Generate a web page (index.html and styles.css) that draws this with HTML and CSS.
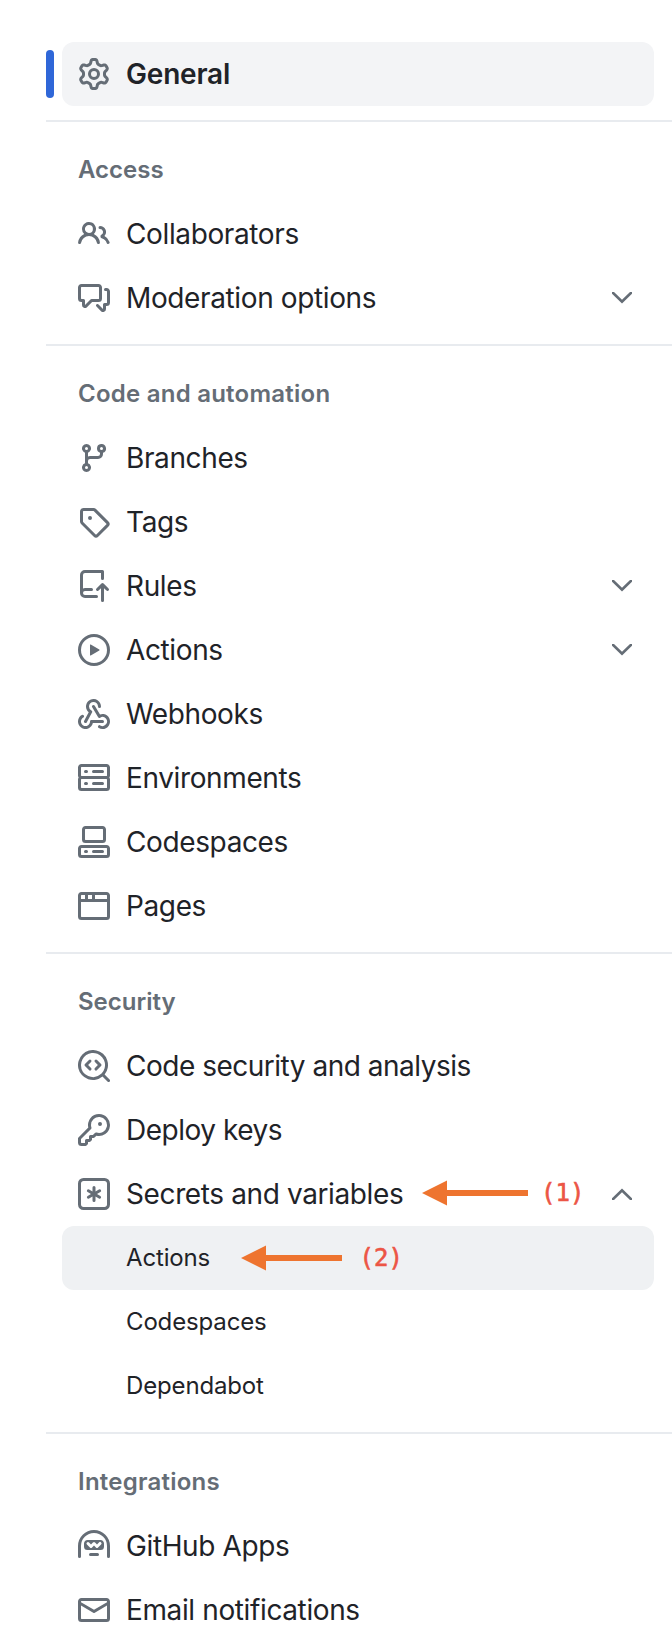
FILE: index.html
```
<!DOCTYPE html>
<html lang="en">
<head>
<meta charset="utf-8">
<title>Settings</title>
<link rel="stylesheet" href="styles.css">
</head>
<body>
<nav class="sidebar">
  <ul class="group">
    <li class="item selected"><svg class="icon" viewBox="0 0 16 16"><path d="M8 0a8.2 8.2 0 0 1 .701.031C9.444.095 9.99.645 10.16 1.29l.288 1.107c.018.066.079.158.212.224.231.114.454.243.668.386.123.082.233.09.299.071l1.103-.303c.644-.176 1.392.021 1.82.63.27.385.506.792.704 1.218.315.675.111 1.422-.364 1.891l-.814.806c-.049.048-.098.147-.088.294.016.257.016.515 0 .772-.01.147.038.246.088.294l.814.806c.475.469.679 1.216.364 1.891a7.977 7.977 0 0 1-.704 1.217c-.428.61-1.176.807-1.82.63l-1.102-.302c-.067-.019-.177-.011-.3.071a5.909 5.909 0 0 1-.668.386c-.133.066-.194.158-.211.224l-.29 1.106c-.168.646-.715 1.196-1.458 1.26a8.006 8.006 0 0 1-1.402 0c-.743-.064-1.289-.614-1.458-1.26l-.289-1.106c-.018-.066-.079-.158-.212-.224a5.738 5.738 0 0 1-.668-.386c-.123-.082-.233-.09-.299-.071l-1.103.303c-.644.176-1.392-.021-1.82-.63a8.12 8.12 0 0 1-.704-1.218c-.315-.675-.111-1.422.363-1.891l.815-.806c.05-.048.098-.147.088-.294a6.214 6.214 0 0 1 0-.772c.01-.147-.038-.246-.088-.294l-.815-.806C.635 6.045.431 5.298.746 4.623a7.92 7.92 0 0 1 .704-1.217c.428-.61 1.176-.807 1.82-.63l1.102.302c.067.019.177.011.3-.071.214-.143.437-.272.668-.386.133-.066.194-.158.211-.224l.29-1.106C6.009.645 6.556.095 7.299.03 7.53.01 7.764 0 8 0Zm-.571 1.525c-.036.003-.108.036-.137.146l-.289 1.105c-.147.561-.549.967-.998 1.189-.173.086-.34.183-.5.29-.417.278-.97.423-1.529.27l-1.103-.303c-.109-.03-.175.016-.195.045-.22.312-.412.644-.573.99-.014.031-.021.11.059.19l.815.806c.411.406.562.957.53 1.456a4.709 4.709 0 0 0 0 .582c.032.499-.119 1.05-.53 1.456l-.815.806c-.081.08-.073.159-.059.19.162.346.353.677.573.989.02.03.085.076.195.046l1.102-.303c.56-.153 1.113-.008 1.53.27.161.107.328.204.501.29.447.222.85.629.997 1.189l.289 1.105c.029.109.101.143.137.146a6.6 6.6 0 0 0 1.142 0c.036-.003.108-.036.137-.146l.289-1.105c.147-.561.549-.967.998-1.189.173-.086.34-.183.5-.29.417-.278.97-.423 1.529-.27l1.103.303c.109.029.175-.016.195-.045.22-.313.411-.644.573-.99.014-.031.021-.11-.059-.19l-.815-.806c-.411-.406-.562-.957-.53-1.456a4.709 4.709 0 0 0 0-.582c-.032-.499.119-1.05.53-1.456l.815-.806c.081-.08.073-.159.059-.19a6.464 6.464 0 0 0-.573-.989c-.02-.03-.085-.076-.195-.046l-1.102.303c-.56.153-1.113.008-1.53-.27a4.44 4.44 0 0 0-.501-.29c-.447-.222-.85-.629-.997-1.189l-.289-1.105c-.029-.11-.101-.143-.137-.146a6.6 6.6 0 0 0-1.142 0ZM11 8a3 3 0 1 1-6 0 3 3 0 0 1 6 0ZM9.5 8a1.5 1.5 0 1 0-3.001.001A1.5 1.5 0 0 0 9.5 8Z"/></svg><span class="label">General</span></li>
  </ul>

  <h2 class="heading">Access</h2>
  <ul class="group">
    <li class="item"><svg class="icon" viewBox="0 0 16 16"><path d="M2 5.5a3.5 3.5 0 1 1 5.898 2.549 5.508 5.508 0 0 1 3.034 4.084.75.75 0 1 1-1.482.235 4 4 0 0 0-7.9 0 .75.75 0 0 1-1.482-.236A5.507 5.507 0 0 1 3.102 8.05 3.493 3.493 0 0 1 2 5.5ZM11 4a3.001 3.001 0 0 1 2.22 5.018 5.01 5.01 0 0 1 2.56 3.012.749.749 0 0 1-.885.954.752.752 0 0 1-.549-.514 3.507 3.507 0 0 0-2.522-2.372.75.75 0 0 1-.574-.73v-.352a.75.75 0 0 1 .416-.672A1.5 1.5 0 0 0 11 5.5.75.75 0 0 1 11 4Zm-5.5-.5a2 2 0 1 0-.001 3.999A2 2 0 0 0 5.5 3.5Z"/></svg><span class="label">Collaborators</span></li>
    <li class="item"><svg class="icon" viewBox="0 0 16 16"><path d="M1.75 1h8.5c.966 0 1.75.784 1.75 1.75v5.5A1.75 1.75 0 0 1 10.25 10H7.061l-2.574 2.573A1.458 1.458 0 0 1 2 11.543V10h-.25A1.75 1.75 0 0 1 0 8.25v-5.5C0 1.784.784 1 1.75 1ZM1.5 2.75v5.5c0 .138.112.25.25.25h1a.75.75 0 0 1 .75.75v2.19l2.72-2.72a.749.749 0 0 1 .53-.22h3.5a.25.25 0 0 0 .25-.25v-5.5a.25.25 0 0 0-.25-.25h-8.5a.25.25 0 0 0-.25.25Zm13 2a.25.25 0 0 0-.25-.25h-.5a.75.75 0 0 1 0-1.5h.5c.966 0 1.75.784 1.75 1.75v5.5A1.75 1.75 0 0 1 14.25 12H14v1.543a1.458 1.458 0 0 1-2.487 1.03L9.22 12.28a.749.749 0 0 1 .326-1.275.749.749 0 0 1 .734.215l2.22 2.22v-2.19a.75.75 0 0 1 .75-.75h1a.25.25 0 0 0 .25-.25Z"/></svg><span class="label">Moderation options</span><svg class="icon chevron" viewBox="0 0 16 16"><path d="M3 5h1L8 8.9 12 5h1v.9L8 10.75 3 5.9Z"/></svg></li>
  </ul>

  <h2 class="heading wide">Code and automation</h2>
  <ul class="group">
    <li class="item"><svg class="icon" viewBox="0 0 16 16"><path d="M9.5 3.25a2.25 2.25 0 1 1 3 2.122V6A2.5 2.5 0 0 1 10 8.5H6a1 1 0 0 0-1 1v1.128a2.251 2.251 0 1 1-1.5 0V5.372a2.25 2.25 0 1 1 1.5 0v1.836A2.493 2.493 0 0 1 6 7h4a1 1 0 0 0 1-1v-.628A2.25 2.25 0 0 1 9.5 3.25Zm-6 0a.75.75 0 1 0 1.5 0 .75.75 0 0 0-1.5 0Zm8.25-.75a.75.75 0 1 0 0 1.5.75.75 0 0 0 0-1.5ZM4.25 12a.75.75 0 1 0 0 1.5.75.75 0 0 0 0-1.5Z"/></svg><span class="label">Branches</span></li>
    <li class="item"><svg class="icon" viewBox="0 0 16 16"><path d="M1 7.775V2.75C1 1.784 1.784 1 2.75 1h5.025c.464 0 .91.184 1.238.513l6.25 6.25a1.75 1.75 0 0 1 0 2.474l-5.026 5.026a1.75 1.75 0 0 1-2.474 0l-6.25-6.25A1.752 1.752 0 0 1 1 7.775Zm1.5 0c0 .066.026.13.073.177l6.25 6.25a.25.25 0 0 0 .354 0l5.025-5.025a.25.25 0 0 0 0-.354l-6.25-6.25a.25.25 0 0 0-.177-.073H2.75a.25.25 0 0 0-.25.25ZM6 5a1 1 0 1 1 0 2 1 1 0 0 1 0-2Z"/></svg><span class="label">Tags</span></li>
    <li class="item"><svg class="icon" viewBox="0 0 16 16"><path d="M1 2.5A2.5 2.5 0 0 1 3.5 0h8.75a.75.75 0 0 1 .75.75v3.5a.75.75 0 0 1-1.5 0V1.5h-8a1 1 0 0 0-1 1v6.708A2.493 2.493 0 0 1 3.5 9h3.25a.75.75 0 0 1 0 1.5H3.5a1 1 0 0 0 0 2h5.75a.75.75 0 0 1 0 1.5H3.5A2.5 2.5 0 0 1 1 11.5Zm13.23 7.79-1.224-1.224v6.184a.75.75 0 0 1-1.5 0V9.066L10.28 10.29a.75.75 0 0 1-1.06-1.061l2.505-2.504a.75.75 0 0 1 1.06 0L15.29 9.23a.751.751 0 0 1-.018 1.042.751.751 0 0 1-1.042.018Z"/></svg><span class="label">Rules</span><svg class="icon chevron" viewBox="0 0 16 16"><path d="M3 5h1L8 8.9 12 5h1v.9L8 10.75 3 5.9Z"/></svg></li>
    <li class="item"><svg class="icon" viewBox="0 0 16 16"><path d="M8 0a8 8 0 1 1 0 16A8 8 0 0 1 8 0ZM1.5 8a6.5 6.5 0 1 0 13 0 6.5 6.5 0 0 0-13 0Zm4.879-2.773 4.264 2.559a.25.25 0 0 1 0 .428l-4.264 2.559A.25.25 0 0 1 6 10.559V5.442a.25.25 0 0 1 .379-.215Z"/></svg><span class="label">Actions</span><svg class="icon chevron" viewBox="0 0 16 16"><path d="M3 5h1L8 8.9 12 5h1v.9L8 10.75 3 5.9Z"/></svg></li>
    <li class="item"><svg class="icon" viewBox="0 0 16 16"><path d="M5.5 4.25a2.25 2.25 0 0 1 4.5 0 .75.75 0 0 0 1.5 0 3.75 3.75 0 1 0-6.14 2.889l-2.272 4.258a.75.75 0 0 0 1.324.706L7 7.25a.75.75 0 0 0-.309-1.015A2.25 2.25 0 0 1 5.5 4.25Z"/><path d="M7.364 3.607a.75.75 0 0 1 1.03.257l2.608 4.349a3.75 3.75 0 1 1-.628 6.785.75.75 0 0 1 .752-1.299 2.25 2.25 0 1 0-.033-3.88.75.75 0 0 1-1.03-.256L7.107 4.636a.75.75 0 0 1 .257-1.03Z"/><path d="M2.9 8.776A.75.75 0 0 1 2.625 9.8 2.25 2.25 0 1 0 6 11.75a.75.75 0 0 1 .75-.751h5.5a.75.75 0 0 1 0 1.5H7.425a3.751 3.751 0 1 1-5.55-3.998.75.75 0 0 1 1.024.274Z"/></svg><span class="label">Webhooks</span></li>
    <li class="item"><svg class="icon" viewBox="0 0 16 16"><path d="M1.75 1h12.5c.966 0 1.75.784 1.75 1.75v4c0 .372-.116.717-.314 1 .198.283.314.628.314 1v4a1.75 1.75 0 0 1-1.75 1.75H1.75A1.75 1.75 0 0 1 0 12.75v-4c0-.358.109-.707.314-1a1.739 1.739 0 0 1-.314-1v-4C0 1.784.784 1 1.75 1ZM1.5 2.75v4c0 .138.112.25.25.25h12.5a.25.25 0 0 0 .25-.25v-4a.25.25 0 0 0-.25-.25H1.75a.25.25 0 0 0-.25.25Zm.25 5.75a.25.25 0 0 0-.25.25v4c0 .138.112.25.25.25h12.5a.25.25 0 0 0 .25-.25v-4a.25.25 0 0 0-.25-.25ZM7 4.75A.75.75 0 0 1 7.75 4h4.5a.75.75 0 0 1 0 1.5h-4.5A.75.75 0 0 1 7 4.75ZM7.75 10h4.5a.75.75 0 0 1 0 1.5h-4.5a.75.75 0 0 1 0-1.5ZM3 4.75A.75.75 0 0 1 3.75 4h.5a.75.75 0 0 1 0 1.5h-.5A.75.75 0 0 1 3 4.75ZM3.75 10h.5a.75.75 0 0 1 0 1.5h-.5a.75.75 0 0 1 0-1.5Z"/></svg><span class="label">Environments</span></li>
    <li class="item"><svg class="icon" viewBox="0 0 16 16"><path d="M0 11.25c0-.966.784-1.75 1.75-1.75h12.5c.966 0 1.75.784 1.75 1.75v3A1.75 1.75 0 0 1 14.25 16H1.75A1.75 1.75 0 0 1 0 14.25Zm2-9.5C2 .784 2.784 0 3.75 0h8.5C13.216 0 14 .784 14 1.75v5a1.75 1.75 0 0 1-1.75 1.75h-8.5A1.75 1.75 0 0 1 2 6.75Zm1.75-.25a.25.25 0 0 0-.25.25v5c0 .138.112.25.25.25h8.5a.25.25 0 0 0 .25-.25v-5a.25.25 0 0 0-.25-.25Zm-2 9.5a.25.25 0 0 0-.25.25v3c0 .138.112.25.25.25h12.5a.25.25 0 0 0 .25-.25v-3a.25.25 0 0 0-.25-.25Z"/><path d="M7 12.75a.75.75 0 0 1 .75-.75h4.5a.75.75 0 0 1 0 1.5h-4.5a.75.75 0 0 1-.75-.75Zm-4 0a.75.75 0 0 1 .75-.75h.5a.75.75 0 0 1 0 1.5h-.5a.75.75 0 0 1-.75-.75Z"/></svg><span class="label">Codespaces</span></li>
    <li class="item"><svg class="icon" viewBox="0 0 16 16"><path d="M0 2.75C0 1.784.784 1 1.75 1h12.5c.966 0 1.75.784 1.75 1.75v10.5A1.75 1.75 0 0 1 14.25 15H1.75A1.75 1.75 0 0 1 0 13.25ZM14.5 6h-13v7.25c0 .138.112.25.25.25h12.5a.25.25 0 0 0 .25-.25Zm-6-3.5v2h6V2.75a.25.25 0 0 0-.25-.25ZM5 2.5v2h2v-2Zm-3.25 0a.25.25 0 0 0-.25.25V4.5h2v-2Z"/></svg><span class="label">Pages</span></li>
  </ul>

  <h2 class="heading">Security</h2>
  <ul class="group">
    <li class="item tight"><svg class="icon" viewBox="0 0 16 16"><path d="M8.47 4.97a.75.75 0 0 0 0 1.06L9.94 7.5 8.47 8.97a.75.75 0 1 0 1.06 1.06l2-2a.75.75 0 0 0 0-1.06l-2-2a.75.75 0 0 0-1.06 0ZM6.53 6.03a.75.75 0 0 0-1.06-1.06l-2 2a.75.75 0 0 0 0 1.06l2 2a.75.75 0 1 0 1.06-1.06L5.06 7.5l1.47-1.47Z"/><path d="M12.246 13.307a7.501 7.501 0 1 1 1.06-1.06l2.474 2.473a.749.749 0 0 1-.326 1.275.749.749 0 0 1-.734-.215ZM1.5 7.5a6.002 6.002 0 0 0 3.608 5.504 6.002 6.002 0 0 0 6.486-1.117.748.748 0 0 1 .292-.293A6 6 0 1 0 1.5 7.5Z"/></svg><span class="label">Code security and analysis</span></li>
    <li class="item tight"><svg class="icon" viewBox="0 0 16 16"><path d="M10.5 0a5.499 5.499 0 1 1-1.288 10.848l-.932.932a.749.749 0 0 1-.53.22H7v.75a.749.749 0 0 1-.22.53l-.5.5a.749.749 0 0 1-.53.22H5v.75a.749.749 0 0 1-.22.53l-.5.5a.749.749 0 0 1-.53.22h-2A1.75 1.75 0 0 1 0 14.25v-2c0-.199.079-.389.22-.53l4.932-4.932A5.5 5.5 0 0 1 10.5 0Zm-4 5.5c-.001.431.069.86.205 1.269a.75.75 0 0 1-.181.768L1.5 12.56v1.69c0 .138.112.25.25.25h1.69l.06-.06v-1.19a.75.75 0 0 1 .75-.75h1.19l.06-.06v-1.19a.75.75 0 0 1 .75-.75h1.19l1.023-1.025a.75.75 0 0 1 .768-.18A4 4 0 1 0 6.5 5.5ZM11 6a1 1 0 1 1 0-2 1 1 0 0 1 0 2Z"/></svg><span class="label">Deploy keys</span></li>
    <li class="item"><svg class="icon" viewBox="0 0 16 16"><path d="M0 2.75A2.75 2.75 0 0 1 2.75 0h10.5A2.75 2.75 0 0 1 16 2.75v10.5A2.75 2.75 0 0 1 13.25 16H2.75A2.75 2.75 0 0 1 0 13.25ZM2.75 1.5c-.69 0-1.25.56-1.25 1.25v10.5c0 .69.56 1.25 1.25 1.25h10.5c.69 0 1.25-.56 1.25-1.25V2.75c0-.69-.56-1.25-1.25-1.25Z"/><path d="M8 4a.75.75 0 0 1 .75.75V6.7l1.69-.975a.75.75 0 0 1 .75 1.3L9.5 8l1.69.976a.75.75 0 0 1-.75 1.298L8.75 9.3v1.951a.75.75 0 0 1-1.5 0V9.299l-1.69.976a.75.75 0 0 1-.75-1.3L6.5 8l-1.69-.975a.75.75 0 0 1 .75-1.3l1.69.976V4.75A.75.75 0 0 1 8 4Z"/></svg><span class="label">Secrets and variables</span><span class="note note-first"><svg class="arrow" width="106" height="26" viewBox="0 0 106 26"><path d="M0 13 25 .5v9.5h81v6H25v9.5Z"/></svg><span class="note-text">(1)</span></span><svg class="icon chevron" viewBox="0 0 16 16"><path d="M3 11h1l4-3.9 4 3.9h1v-.9L8 5.25 3 10.1Z"/></svg></li>
    <li class="item sub active"><span class="label">Actions</span><span class="note note-second"><svg class="arrow" width="101" height="26" viewBox="0 0 101 26"><path d="M0 13 25 .5v9.5h76v6H25v9.5Z"/></svg><span class="note-text">(2)</span></span></li>
    <li class="item sub"><span class="label">Codespaces</span></li>
    <li class="item sub"><span class="label">Dependabot</span></li>
  </ul>

  <h2 class="heading wide">Integrations</h2>
  <ul class="group">
    <li class="item"><svg class="icon" viewBox="0 0 16 16"><path fill-rule="evenodd" d="M0 8a8 8 0 1 1 16 0v5.25a.75.75 0 0 1-1.5 0V8a6.5 6.5 0 1 0-13 0v5.25a.75.75 0 0 1-1.5 0V8Zm5.5 4.25a.75.75 0 0 1 .75-.75h3.5a.75.75 0 0 1 0 1.5h-3.5a.75.75 0 0 1-.75-.75ZM3 6.75C3 5.784 3.784 5 4.75 5h6.5c.966 0 1.75.784 1.75 1.75v1.5A1.75 1.75 0 0 1 11.25 10h-6.5A1.75 1.75 0 0 1 3 8.25Zm1.47-.53a.75.75 0 0 1 1.06 0l.97.97.97-.97a.75.75 0 0 1 1.06 0l.97.97.97-.97a.75.75 0 1 1 1.06 1.06l-1.5 1.5a.75.75 0 0 1-1.06 0L8 7.81l-.97.97a.75.75 0 0 1-1.06 0l-1.5-1.5a.75.75 0 0 1 0-1.06Z"/></svg><span class="label">GitHub Apps</span></li>
    <li class="item"><svg class="icon" viewBox="0 0 16 16"><path d="M1.75 2h12.5c.966 0 1.75.784 1.75 1.75v8.5A1.75 1.75 0 0 1 14.25 14H1.75A1.75 1.75 0 0 1 0 12.25v-8.5C0 2.784.784 2 1.75 2ZM1.5 12.251c0 .138.112.25.25.25h12.5a.25.25 0 0 0 .25-.25V5.809L8.38 9.397a.75.75 0 0 1-.76 0L1.5 5.809v6.442Zm13-8.181v-.32a.25.25 0 0 0-.25-.25H1.75a.25.25 0 0 0-.25.25v.32L8 7.88Z"/></svg><span class="label">Email notifications</span></li>
  </ul>
</nav>
</body>
</html>
```
FILE: styles.css
```
* {
  box-sizing: border-box;
}

body {
  margin: 0;
  background: #fff;
  color: #1f2328;
  font-family: Inter, "Liberation Sans", sans-serif;
}

.sidebar {
  padding: 42px 0 4px 46px;
}

.group {
  margin: 0;
  padding: 0 18px 14px 16px;
  list-style: none;
}

.group:last-child {
  padding-bottom: 0;
}

.item {
  position: relative;
  display: flex;
  align-items: center;
  gap: 16px;
  height: 64px;
  padding: 0 16px;
  border-radius: 12px;
  font-size: 28px;
  line-height: 40px;
  letter-spacing: -0.38px;
  white-space: nowrap;
}

.tight {
  letter-spacing: -0.49px;
}

.selected {
  background: #f3f4f6;
  font-weight: 600;
  letter-spacing: -0.2px;
}

/* accent bar in the gutter beside the current page */
.selected::before {
  content: "";
  position: absolute;
  top: 8px;
  left: -16px;
  width: 8px;
  height: 48px;
  border-radius: 4px;
  background: #2f67d8;
}

.icon {
  flex: none;
  width: 32px;
  height: 32px;
  fill: #656d76;
}

.chevron {
  margin-left: auto;
}

.heading {
  height: 82px;
  margin: 0;
  padding: 30px 32px 0;
  border-top: 2px solid #e8ebef;
  color: #656d76;
  font-size: 24px;
  font-weight: 600;
  line-height: 36px;
}

.wide {
  letter-spacing: 0.24px;
}

.sub {
  padding-left: 64px;
  font-size: 24px;
  letter-spacing: -0.15px;
}

.active {
  background: #eff1f3;
}

/* callouts drawn over the menu rows */
.note {
  position: absolute;
  display: flex;
  align-items: center;
  gap: 13px;
  height: 26px;
  letter-spacing: 0;
}

.note-first {
  top: 17.5px;
  left: 360px;
}

.note-second {
  top: 18.5px;
  left: 178.5px;
  gap: 18px;
}

.arrow {
  fill: #ee742f;
}

.note-text {
  color: #ec5545;
  font-family: "DejaVu Sans Mono", monospace;
  font-size: 24px;
  line-height: 26px;
  -webkit-text-stroke: 0.6px #ec5545;
}
```
